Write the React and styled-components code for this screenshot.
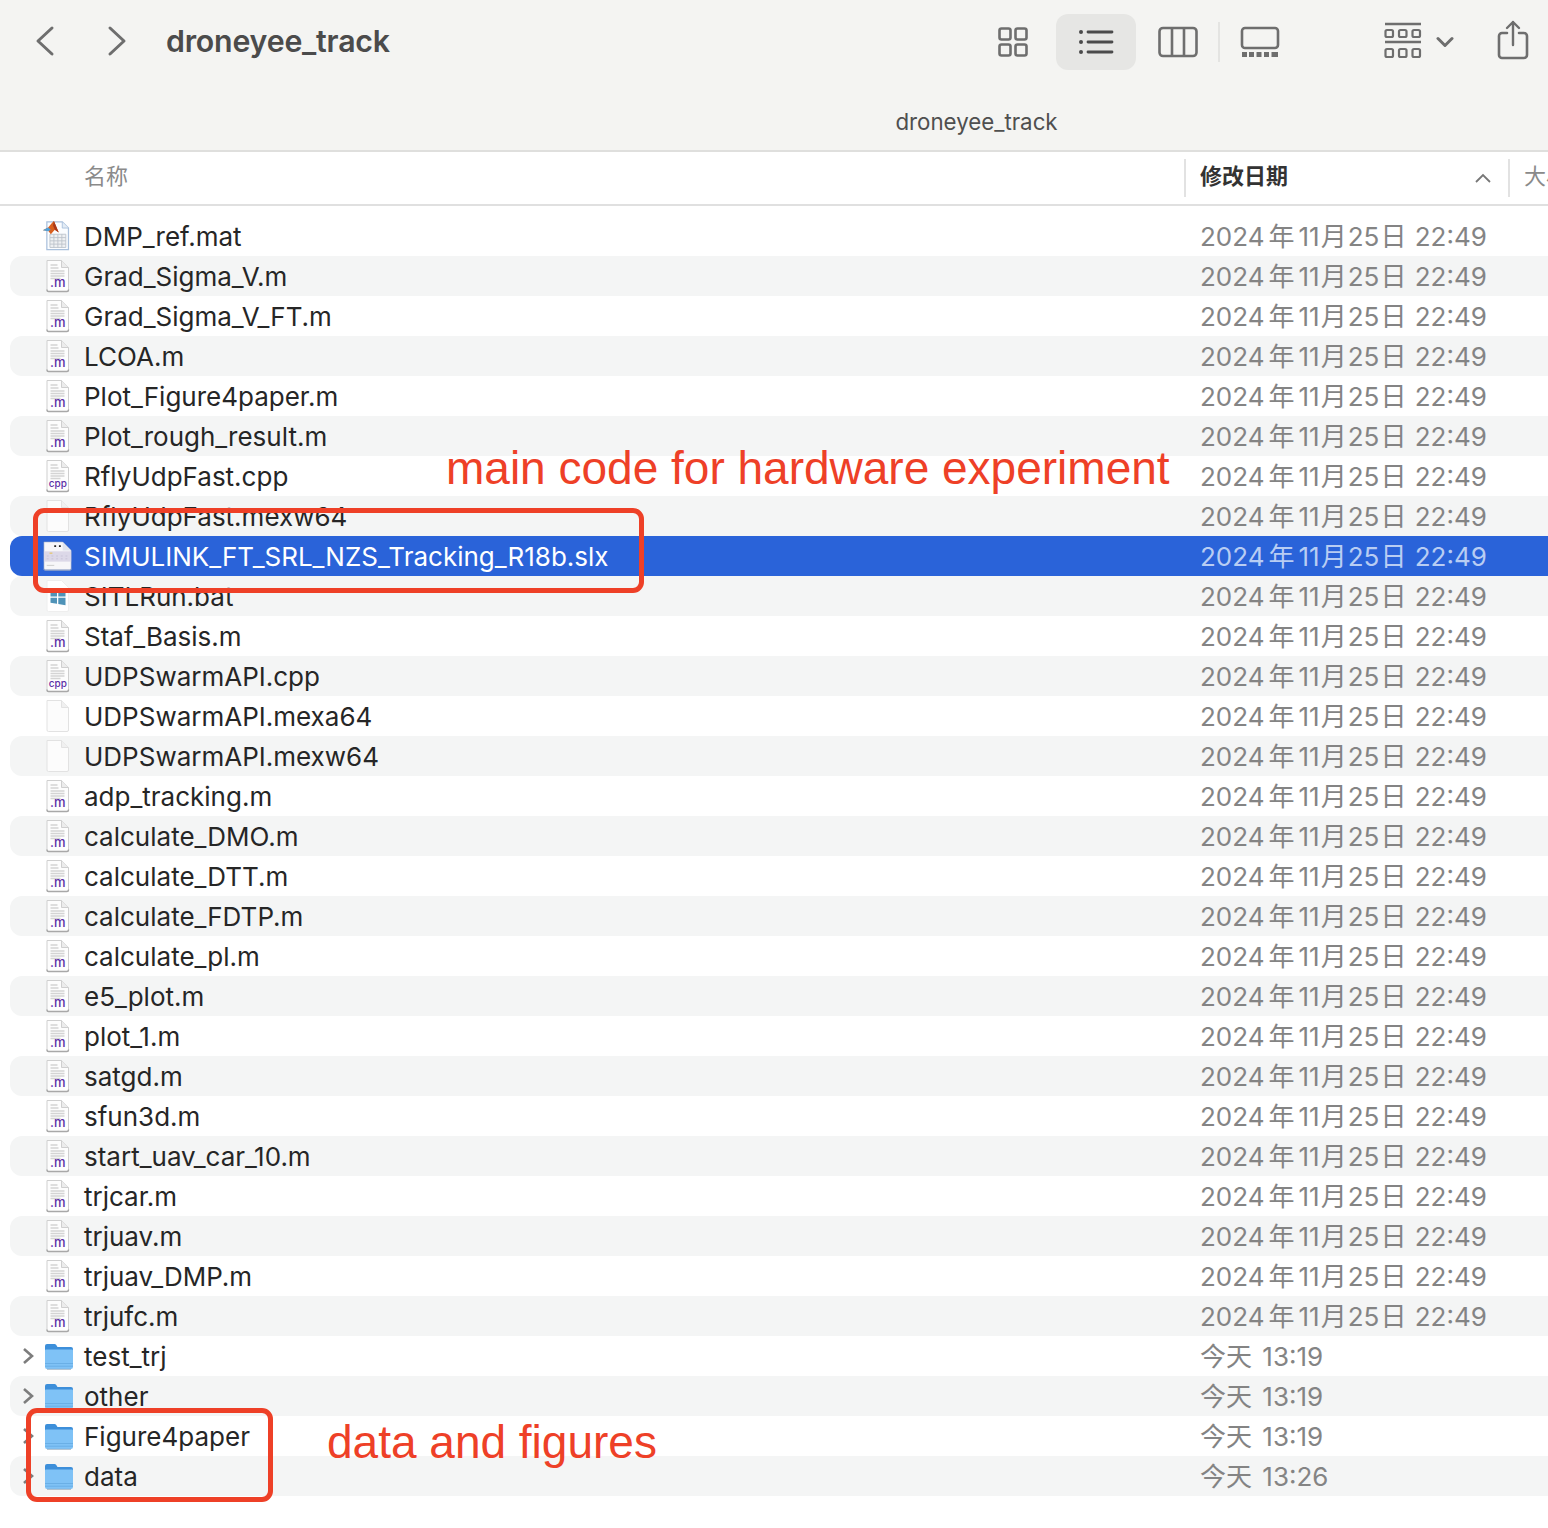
import React from "react";
import styled, { createGlobalStyle } from "styled-components";

const Global = createGlobalStyle`
  html, body { margin: 0; padding: 0; background: #fff; }
  body { font-family: Inter, "Noto Sans CJK SC", sans-serif; }
`;

const Page = styled.div`
  position: relative;
  width: 1548px;
  height: 1528px;
  overflow: hidden;
  background: #fff;
`;

const Toolbar = styled.header`
  height: 150px;
  background: #f4f4f2;
  border-bottom: 2px solid #dfdfdd;
  display: flex;
  flex-direction: column;
`;
const ToolRow = styled.div`
  height: 84px;
  padding-right: 19px;
  display: flex;
  align-items: center;
  color: #6e6e6e;
`;
const NavIcon = styled.svg`
  width: 22px;
  height: 32px;
  margin-left: ${p => p.$ml}px;
  flex: none;
  position: relative;
  top: -1px;
`;
const Title = styled.h1`
  margin: 0 0 0 38px;
  font-size: 30.3px;
  font-weight: 600;
  letter-spacing: -0.2px;
  color: #4b4b4b;
  flex: 1;
  position: relative;
  top: -1px;
`;
const ViewIcon = styled.svg`
  flex: none;
  display: block;
  margin-left: ${p => p.$ml || 0}px;
  position: relative;
  top: ${p => p.$top || 0}px;
`;
const ActiveView = styled.div`
  width: 80px;
  height: 56px;
  margin-left: 27px;
  border-radius: 12px;
  background: #e6e6e4;
  display: flex;
  align-items: center;
  justify-content: center;
  flex: none;
`;
const Divider = styled.div`
  width: 2px;
  height: 40px;
  background: #e4e4e2;
  margin-left: 20px;
  flex: none;
`;
const PathLabel = styled.div`
  text-align: center;
  padding-left: 405px;
  margin-top: 18px;
  font-size: 22.3px;
  color: #4f4f4f;
  line-height: 40px;
`;

const Header = styled.div`
  height: 52px;
  border-bottom: 2px solid #e0e0e0;
  display: flex;
  align-items: center;
  position: relative;
`;
const NameHead = styled.div`
  margin-left: 84px;
  width: 1100px;
  font-size: 22px;
  color: #8a8a8a;
  flex: none;
  padding-bottom: 8px;
`;
const ColSep = styled.div`
  width: 2px;
  height: 38px;
  background: #e2e2e2;
  flex: none;
`;
const DateHead = styled.div`
  width: 322px;
  box-sizing: border-box;
  padding: 0 16px 0 14px;
  display: flex;
  align-items: center;
  justify-content: space-between;
  font-size: 22px;
  font-weight: 700;
  color: #333;
  flex: none;
  & > span { padding-bottom: 8px; }
`;
const SizeHead = styled.div`
  margin-left: 14px;
  font-size: 22px;
  color: #8a8a8a;
  white-space: nowrap;
  padding-bottom: 8px;
`;

const List = styled.div`
  padding-top: 10px;
`;
const Row = styled.div`
  height: 40px;
  margin-left: 10px;
  border-radius: 12px 0 0 12px;
  display: flex;
  align-items: center;
  background: ${p => (p.$selected ? "#2a63d9" : p.$odd ? "#f4f5f5" : "#fff")};
`;
const Disclosure = styled.div`
  width: 34px;
  flex: none;
  display: flex;
  justify-content: center;
  padding-left: 2px;
  box-sizing: border-box;
`;
const IconSlot = styled.div`
  width: 40px;
  height: 40px;
  flex: none;
  display: flex;
  align-items: center;
  justify-content: flex-start;
`;
const Name = styled.div`
  width: 1116px;
  flex: none;
  font-size: 26px;
  color: ${p => (p.$selected ? "#fff" : "#262626")};
  white-space: nowrap;
`;
const DateCell = styled.div`
  font-size: 26px;
  padding-bottom: 3px;
  color: ${p => (p.$selected ? "#b8cdf3" : "#848484")};
  white-space: nowrap;
`;
const Cjk = styled.span`
  margin: 0 ${p => p.$r || 0}px 0 ${p => p.$l || 0}px;
`;

const Callout = styled.div`
  position: absolute;
  left: ${p => p.$x}px;
  top: ${p => p.$y}px;
  width: ${p => p.$w}px;
  height: ${p => p.$h}px;
  box-sizing: border-box;
  border: 5px solid #ee4027;
  border-radius: 11px;
`;
const Note = styled.div`
  position: absolute;
  left: ${p => p.$x}px;
  top: ${p => p.$y}px;
  font-family: "Liberation Sans", Arial, sans-serif;
  font-size: 46px;
  line-height: 56px;
  color: #ee4027;
  white-space: nowrap;
`;

const m = ".m", c = ".cpp", b = "blank";
const FILES = [
  ["DMP_ref.mat", "mat"], ["Grad_Sigma_V.m", m], ["Grad_Sigma_V_FT.m", m], ["LCOA.m", m],
  ["Plot_Figure4paper.m", m], ["Plot_rough_result.m", m], ["RflyUdpFast.cpp", c],
  ["RflyUdpFast.mexw64", b], ["SIMULINK_FT_SRL_NZS_Tracking_R18b.slx", "slx"], ["SITLRun.bat", "bat"],
  ["Staf_Basis.m", m], ["UDPSwarmAPI.cpp", c], ["UDPSwarmAPI.mexa64", b], ["UDPSwarmAPI.mexw64", b],
  ["adp_tracking.m", m], ["calculate_DMO.m", m], ["calculate_DTT.m", m], ["calculate_FDTP.m", m],
  ["calculate_pl.m", m], ["e5_plot.m", m], ["plot_1.m", m], ["satgd.m", m], ["sfun3d.m", m],
  ["start_uav_car_10.m", m], ["trjcar.m", m], ["trjuav.m", m], ["trjuav_DMP.m", m], ["trjufc.m", m],
  ["test_trj", "dir", "13:19"], ["other", "dir", "13:19"], ["Figure4paper", "dir", "13:19"], ["data", "dir", "13:26"],
];

const Page0 = "M1.5 1.5H16L23 8.5V31a1.5 1.5 0 0 1-1.5 1.5H3A1.5 1.5 0 0 1 1.5 31Z";
const FileSvg = styled.svg`
  flex: none;
  margin-left: ${p => p.$ml || 0}px;
`;
function DocIcon({ label }) {
  return (
    <FileSvg $ml={1} width="26" height="35" viewBox="0 0 25 35">
      <path d={Page0} fill="#fdfdfd" stroke="#cfcfcf" />
      <path d="M16 1.5V8.5H23" fill="#ececec" stroke="#cfcfcf" />
      <path d="M1.5 30.5V31a1.5 1.5 0 0 0 1.5 1.5h18.5a1.5 1.5 0 0 0 1.5-1.5v-.5" fill="none" stroke="#a8a8a8" strokeWidth="1.4" />
      <path d="M5 6h7M5 9h8M5 12h14M5 14.5h14M5 17h14M5 19.5h10" stroke="#d4d4d4" strokeWidth="1.4" />
      <text x="12.3" y="28" textAnchor="middle" fontFamily="Inter, sans-serif" fontSize={label === ".m" ? 13 : 10} fontWeight="500" fill="#5b2ea6">
        {label === ".cpp" ? "cpp" : label}
      </text>
    </FileSvg>
  );
}
function BlankIcon() {
  return (
    <FileSvg $ml={1} width="26" height="35" viewBox="0 0 25 35">
      <path d={Page0} fill="#fcfcfc" stroke="#e2e2e2" />
      <path d="M16 1.5V8.5H23" fill="#f0f0f0" stroke="#e2e2e2" />
    </FileSvg>
  );
}
function MatIcon() {
  return (
    <FileSvg $ml={-2} width="30" height="36" viewBox="0 0 34 36">
      <path d="M5.5 2H23L30 9V33.5H5.5Z" fill="#fbfdff" stroke="#a9c0dc" strokeWidth="1.4" />
      <path d="M23 2V9H30" fill="#e3ecf5" stroke="#a9c0dc" />
      <path d="M9 16H27V31H9ZM9 19.8H27M9 23.5H27M9 27.2H27M13.5 16V31M18 16V31M22.5 16V31" fill="#eef0f2" stroke="#bcc3cb" />
      <path d="M1 11.5 7 8.5 11 3.5 13.5 1 16 7 19 14 14.5 11 10 16 7 12Z" fill="#d9601f" />
      <path d="M1 11.5 7 8.5 10 11 7 12.5Z" fill="#4e9fd8" />
      <path d="M13.5 1 16 7 19 14 14.5 11 12.5 6Z" fill="#a8391b" />
    </FileSvg>
  );
}
function SlxIcon() {
  return (
    <FileSvg $ml={-1} width="30" height="32" viewBox="0 0 32 32">
      <path d="M1 1H21L30 10V29.5a1.5 1.5 0 0 1-1.5 1.5H2.5A1.5 1.5 0 0 1 1 29.5Z" fill="#f7f6f9" stroke="#9aa6c4" strokeWidth=".6" />
      <path d="M21 1V10H30" fill="#dfe3ee" />
      <rect x="1" y="11" width="29" height="11" fill="#dcd8e8" />
      <path d="M12 5.5h2M17 5.5h2" stroke="#222" strokeWidth="2" />
      <path d="M7 13h3" stroke="#e5c77a" strokeWidth="1.5" />
      <path d="M4 16h22M4 19h22" stroke="#c7c3d8" strokeDasharray="2 3" />
      <path d="M4 26h8" stroke="#ccc" />
      <path d="M1 29.5a1.5 1.5 0 0 0 1.5 1.5h26a1.5 1.5 0 0 0 1.5-1.5" fill="none" stroke="#8da0c8" strokeWidth="1.2" />
    </FileSvg>
  );
}
function BatIcon() {
  return (
    <FileSvg $ml={1} width="26" height="35" viewBox="0 0 25 35">
      <path d={Page0} fill="#fff" stroke="#eee" />
      <path d="M5 12.5 11.5 11.5V17.5H5ZM12.8 11.3 20 10V17.5H12.8ZM5 18.8H11.5V24.8L5 23.8ZM12.8 18.8H20V26.3L12.8 25Z" fill="#4f93b8" />
    </FileSvg>
  );
}
function FolderIcon() {
  return (
    <FileSvg width="30" height="28" viewBox="0 0 30 28">
      <path d="M1 4a2 2 0 0 1 2-2h7.5a2 2 0 0 1 1.6.8L13.5 5H27a2 2 0 0 1 2 2v6H1Z" fill="#3d8fda" />
      <path d="M1 8.5a1 1 0 0 1 1-1h26a1 1 0 0 1 1 1V25a2 2 0 0 1-2 2H3a2 2 0 0 1-2-2Z" fill="#7fc2f6" />
      <path d="M1 21.5H29M1 24.2H29" stroke="#64a9e2" strokeWidth=".8" />
      <path d="M3 27.3H27" stroke="#8aa4ba" strokeWidth=".8" />
    </FileSvg>
  );
}
function FileIcon({ kind }) {
  if (kind === "mat") return <MatIcon />;
  if (kind === "slx") return <SlxIcon />;
  if (kind === "bat") return <BatIcon />;
  if (kind === "dir") return <FolderIcon />;
  if (kind === "blank") return <BlankIcon />;
  return <DocIcon label={kind} />;
}

const stroke = { fill: "none", stroke: "currentColor", strokeWidth: 3, strokeLinecap: "round", strokeLinejoin: "round" };

export default function App() {
  return (
    <Page>
      <Global />
      <Toolbar>
        <ToolRow>
          <NavIcon $ml={34} viewBox="0 0 22 32"><path d="M18 3 4 16 18 29" {...stroke} /></NavIcon>
          <NavIcon $ml={50} viewBox="0 0 22 32"><path d="M4 3 18 16 4 29" {...stroke} /></NavIcon>
          <Title>droneyee_track</Title>
          <ViewIcon width="32" height="32" viewBox="0 0 32 32">
            <g fill="none" stroke="currentColor" strokeWidth="2.6">
              <rect x="2.5" y="2.5" width="11" height="11" rx="2" />
              <rect x="18.5" y="2.5" width="11" height="11" rx="2" />
              <rect x="2.5" y="18.5" width="11" height="11" rx="2" />
              <rect x="18.5" y="18.5" width="11" height="11" rx="2" />
            </g>
          </ViewIcon>
          <ActiveView>
            <svg width="36" height="28" viewBox="0 0 36 28" style={{ color: "#4b4b4b" }}>
              <g fill="currentColor"><circle cx="3" cy="4" r="2" /><circle cx="3" cy="14" r="2" /><circle cx="3" cy="24" r="2" /></g>
              <path d="M10 4H34M10 14H34M10 24H34" stroke="currentColor" strokeWidth="2.8" strokeLinecap="round" />
            </svg>
          </ActiveView>
          <ViewIcon $ml={22} width="40" height="32" viewBox="0 0 40 32">
            <rect x="1.5" y="2" width="37" height="28" rx="3.5" fill="none" stroke="currentColor" strokeWidth="2.6" />
            <path d="M14 2V30M26 2V30" stroke="currentColor" strokeWidth="2.6" />
          </ViewIcon>
          <Divider />
          <ViewIcon $ml={20} width="40" height="32" viewBox="0 0 40 32">
            <rect x="2" y="2" width="36" height="20" rx="3" fill="none" stroke="currentColor" strokeWidth="2.6" />
            <path d="M2 28.5H7M9 28.5H14M16.5 28.5H21.5M24 28.5H29M31.5 28.5H38" stroke="currentColor" strokeWidth="5" />
          </ViewIcon>
          <ViewIcon $ml={104} $top={-1} width="38" height="38" viewBox="0 0 38 38">
            <path d="M1 2H37M1 20H37" stroke="currentColor" strokeWidth="2.4" />
            <g fill="none" stroke="currentColor" strokeWidth="2.2">
              <rect x="1.5" y="8" width="7.5" height="7" rx="1.5" /><rect x="15" y="8" width="7.5" height="7" rx="1.5" /><rect x="28.5" y="8" width="7.5" height="7" rx="1.5" />
              <rect x="1.5" y="27" width="7.5" height="8" rx="1.5" /><rect x="15" y="27" width="7.5" height="8" rx="1.5" /><rect x="28.5" y="27" width="7.5" height="8" rx="1.5" />
            </g>
          </ViewIcon>
          <ViewIcon $ml={14} width="18" height="12" viewBox="0 0 18 12">
            <path d="M2 2.5 9 9.5 16 2.5" {...stroke} />
          </ViewIcon>
          <ViewIcon $ml={43} $top={-2} width="32" height="40" viewBox="0 0 32 40">
            <path d="M10 13H5a3 3 0 0 0-3 3V35a3 3 0 0 0 3 3H27a3 3 0 0 0 3-3V16a3 3 0 0 0-3-3H22" fill="none" stroke="currentColor" strokeWidth="2.6" strokeLinecap="round" />
            <path d="M16 25V2M10 8 16 2 22 8" fill="none" stroke="currentColor" strokeWidth="2.4" strokeLinecap="round" strokeLinejoin="round" />
          </ViewIcon>
        </ToolRow>
        <PathLabel>droneyee_track</PathLabel>
      </Toolbar>
      <Header>
        <NameHead>名称</NameHead>
        <ColSep />
        <DateHead>
          <span>修改日期</span>
          <svg width="18" height="10" viewBox="0 0 18 10"><path d="M2 9 9 2 16 9" fill="none" stroke="#777" strokeWidth="1.8" /></svg>
        </DateHead>
        <ColSep />
        <SizeHead>大小</SizeHead>
      </Header>
      <List>
        {FILES.map(([name, kind, time], i) => (
          <Row key={name} $odd={i % 2 === 1} $selected={i === 8}>
            <Disclosure>
              {kind === "dir" && (
                <svg width="14" height="20" viewBox="0 0 14 20"><path d="M3 3 11 10 3 17" fill="none" stroke="#7d7d7d" strokeWidth="2.6" /></svg>
              )}
            </Disclosure>
            <IconSlot><FileIcon kind={kind} /></IconSlot>
            <Name $selected={i === 8}>{name}</Name>
            <DateCell $selected={i === 8}>
              {time ? (
                <><Cjk $r={3}>今天</Cjk> {time}</>
              ) : (
                <>2024<Cjk $l={4} $r={4}>年</Cjk>11<Cjk $l={1} $r={1}>月</Cjk>25<Cjk $l={1} $r={1}>日</Cjk> 22:49</>
              )}
            </DateCell>
          </Row>
        ))}
      </List>
      <Callout $x={33} $y={508} $w={611} $h={85} />
      <Callout $x={26} $y={1408} $w={247} $h={94} />
      <Note $x={446} $y={440}>main code for hardware experiment</Note>
      <Note $x={327} $y={1414}>data and figures</Note>
    </Page>
  );
}
